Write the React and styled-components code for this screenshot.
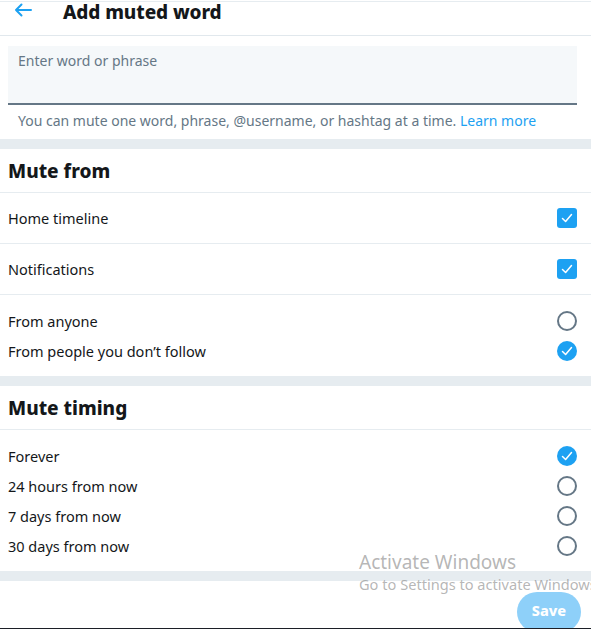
import React, { useState } from "react";
import styled, { createGlobalStyle } from "styled-components";

const GlobalStyle = createGlobalStyle`
  body {
    margin: 0;
    background: #fff;
    font-family: "Noto Sans", "Open Sans", sans-serif;
    color: #14171a;
  }
`;

const Page = styled.div`
  position: relative;
  width: 591px;
  height: 629px;
  overflow: hidden;
  border-top: 1px solid #e6ecf0;
  margin-top: 1px;
  box-sizing: border-box;
`;

const Header = styled.div`
  display: flex;
  align-items: flex-start;
  height: 33px;
  border-bottom: 1px solid #e1e8ed;
  padding-left: 14px;
`;

const BackBtn = styled.button`
  background: none;
  border: 0;
  padding: 0;
  margin-top: 1px;
  width: 18px;
  height: 14px;
  display: flex;
  cursor: pointer;
`;

const Title = styled.h1`
  margin: 0 0 0 31px;
  font-size: 19px;
  font-weight: 800;
  line-height: 20px;
  letter-spacing: -0.1px;
`;

const InputWrap = styled.div`
  padding: 10px 14px 0 8px;
`;

const Input = styled.textarea`
  display: block;
  width: 100%;
  box-sizing: border-box;
  height: 59px;
  resize: none;
  border: 0;
  border-bottom: 2px solid #657786;
  background: #f5f8fa;
  padding: 5px 10px;
  font-family: inherit;
  font-size: 14px;
  color: #14171a;
  outline: none;
  &::placeholder {
    color: #657786;
  }
`;

const Helper = styled.p`
  margin: 0;
  padding: 6px 10px 8px 18px;
  font-size: 14px;
  line-height: 20px;
  color: #657786;
  white-space: nowrap;
  a {
    color: #1da1f2;
    text-decoration: none;
  }
`;

const Band = styled.div`
  height: 10px;
  background: #e6ecf0;
`;

const SectionTitle = styled.h2`
  margin: 0;
  height: 43px;
  display: flex;
  align-items: center;
  padding-left: 8px;
  font-size: 19px;
  font-weight: 800;
  border-bottom: 1px solid #e6ecf0;
`;

const CheckRow = styled.label`
  display: flex;
  align-items: center;
  justify-content: space-between;
  height: 50px;
  padding: 0 14px 0 8px;
  font-size: 14.5px;
  border-bottom: 1px solid #e6ecf0;
  cursor: pointer;
`;

const RadioGroup = styled.div`
  padding: 11px 0 10px;
`;

const RadioRow = styled.label`
  display: flex;
  align-items: center;
  justify-content: space-between;
  height: 30px;
  padding: 0 14px 0 8px;
  font-size: 14.5px;
  cursor: pointer;
`;

const Box = styled.span`
  width: 20px;
  height: 20px;
  box-sizing: border-box;
  border-radius: ${(p) => (p.$round ? "50%" : "3px")};
  background: ${(p) => (p.$on ? "#1da1f2" : "#fff")};
  border: ${(p) => (p.$on ? "0" : "2px solid #657786")};
  display: flex;
  align-items: center;
  justify-content: center;
`;

const Footer = styled.div`
  display: flex;
  justify-content: flex-end;
  height: 47px;
  padding: 11px 10px 0 0;
  box-sizing: border-box;
  overflow: hidden;
`;

const SaveBtn = styled.button`
  height: 40px;
  width: 64px;
  border: 0;
  border-radius: 20px;
  background: #8ed0f9;
  color: #fff;
  font-family: inherit;
  font-weight: 800;
  font-size: 14.5px;
  padding: 0 0 4px;
`;

const Taskbar = styled.div`
  height: 2px;
  background: #1c1f27;
`;

const Watermark = styled.div`
  position: absolute;
  left: 359px;
  top: 548px;
  pointer-events: none;
  color: rgba(120, 120, 120, 0.55);
  white-space: nowrap;
  font-family: "Noto Sans", sans-serif;
`;

const WmTitle = styled.div`
  font-size: 19px;
  line-height: 24px;
`;

const WmSub = styled.div`
  font-size: 14.6px;
  line-height: 20px;
`;

const Check = () => (
  <svg width="14" height="14" viewBox="0 0 14 14">
    <path d="M2.5 7.5 L5.6 10.5 L11.5 3.5" fill="none" stroke="#fff" strokeWidth="1.5" strokeLinecap="round" strokeLinejoin="round" />
  </svg>
);

const ArrowLeft = () => (
  <svg width="18" height="14" viewBox="0 0 18 14">
    <path d="M17 7 H2 M7.5 1.5 L2 7 L7.5 12.5" fill="none" stroke="#1da1f2" strokeWidth="2" strokeLinecap="round" strokeLinejoin="round" />
  </svg>
);

const Toggle = ({ on, round }) => (
  <Box $on={on} $round={round}>{on && <Check />}</Box>
);

export default function App() {
  const [home, setHome] = useState(true);
  const [notif, setNotif] = useState(true);
  const [from, setFrom] = useState("notfollow");
  const [timing, setTiming] = useState("forever");

  const timings = [
    ["forever", "Forever"],
    ["24h", "24 hours from now"],
    ["7d", "7 days from now"],
    ["30d", "30 days from now"],
  ];

  return (
    <>
      <GlobalStyle />
      <Page>
        <Header>
          <BackBtn aria-label="Back"><ArrowLeft /></BackBtn>
          <Title>Add muted word</Title>
        </Header>
        <InputWrap>
          <Input placeholder="Enter word or phrase" />
        </InputWrap>
        <Helper>
          You can mute one word, phrase, @username, or hashtag at a time. <a href="#">Learn more</a>
        </Helper>
        <Band />
        <SectionTitle>Mute from</SectionTitle>
        <CheckRow onClick={() => setHome(!home)}>
          Home timeline <Toggle on={home} />
        </CheckRow>
        <CheckRow onClick={() => setNotif(!notif)}>
          Notifications <Toggle on={notif} />
        </CheckRow>
        <RadioGroup>
          <RadioRow onClick={() => setFrom("anyone")}>
            From anyone <Toggle round on={from === "anyone"} />
          </RadioRow>
          <RadioRow onClick={() => setFrom("notfollow")}>
            From people you don’t follow <Toggle round on={from === "notfollow"} />
          </RadioRow>
        </RadioGroup>
        <Band />
        <SectionTitle>Mute timing</SectionTitle>
        <RadioGroup>
          {timings.map(([key, label]) => (
            <RadioRow key={key} onClick={() => setTiming(key)}>
              {label} <Toggle round on={timing === key} />
            </RadioRow>
          ))}
        </RadioGroup>
        <Band />
        <Footer>
          <SaveBtn>Save</SaveBtn>
        </Footer>
        <Taskbar />
        <Watermark>
          <WmTitle>Activate Windows</WmTitle>
          <WmSub>Go to Settings to activate Windows.</WmSub>
        </Watermark>
      </Page>
    </>
  );
}
